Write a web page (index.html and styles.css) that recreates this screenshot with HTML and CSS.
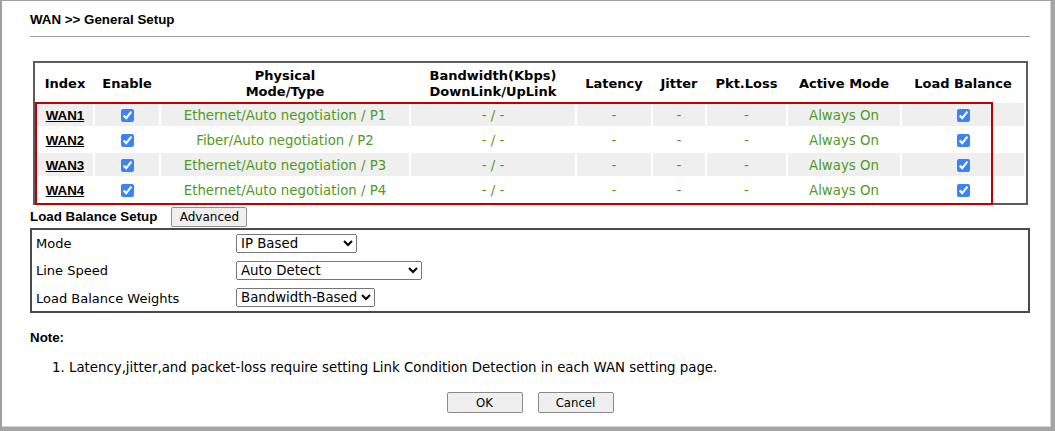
FILE: index.html
```html
<!DOCTYPE html>
<html lang="en">
<head>
  <meta charset="UTF-8" />
  <title>WAN &gt;&gt; General Setup</title>
  <link rel="stylesheet" href="styles.css">
</head>
<body>
  <div class="frame">
    <h1 class="title">WAN &gt;&gt; General Setup</h1>
    <div class="rule"></div>

    <div class="wan-wrap">
      <table class="wan-table">
        <colgroup>
          <col style="width:56px">
          <col style="width:64px">
          <col style="width:248px">
          <col style="width:164px">
          <col style="width:74px">
          <col style="width:52px">
          <col style="width:79px">
          <col style="width:112px">
          <col style="width:122px">
        </colgroup>
        <tr>
          <th>Index</th>
          <th>Enable</th>
          <th>Physical<br>Mode/Type</th>
          <th>Bandwidth(Kbps)<br>DownLink/UpLink</th>
          <th>Latency</th>
          <th>Jitter</th>
          <th>Pkt.Loss</th>
          <th>Active Mode</th>
          <th>Load Balance</th>
        </tr>
        <tr class="alt">
          <td><a class="wan-link" href="#">WAN1</a></td>
          <td><input type="checkbox" checked></td>
          <td>Ethernet/Auto negotiation / P1</td>
          <td>- / -</td>
          <td>-</td>
          <td>-</td>
          <td>-</td>
          <td>Always On</td>
          <td><input type="checkbox" checked></td>
        </tr>
        <tr>
          <td><a class="wan-link" href="#">WAN2</a></td>
          <td><input type="checkbox" checked></td>
          <td>Fiber/Auto negotiation / P2</td>
          <td>- / -</td>
          <td>-</td>
          <td>-</td>
          <td>-</td>
          <td>Always On</td>
          <td><input type="checkbox" checked></td>
        </tr>
        <tr class="alt">
          <td><a class="wan-link" href="#">WAN3</a></td>
          <td><input type="checkbox" checked></td>
          <td>Ethernet/Auto negotiation / P3</td>
          <td>- / -</td>
          <td>-</td>
          <td>-</td>
          <td>-</td>
          <td>Always On</td>
          <td><input type="checkbox" checked></td>
        </tr>
        <tr>
          <td><a class="wan-link" href="#">WAN4</a></td>
          <td><input type="checkbox" checked></td>
          <td>Ethernet/Auto negotiation / P4</td>
          <td>- / -</td>
          <td>-</td>
          <td>-</td>
          <td>-</td>
          <td>Always On</td>
          <td><input type="checkbox" checked></td>
        </tr>
      </table>
      <div class="highlight"></div>
    </div>

    <div class="lb-head">
      <span class="lb-title">Load Balance Setup</span>
      <button class="adv-btn" type="button">Advanced</button>
    </div>

    <div class="lb-box">
      <label>Mode</label>
      <select class="sel-mode">
        <option>IP Based</option>
        <option>Session Based</option>
      </select>

      <label>Line Speed</label>
      <select class="sel-speed">
        <option>Auto Detect</option>
        <option>According to Line Speed</option>
      </select>

      <label>Load Balance Weights</label>
      <select class="sel-weight">
        <option>Bandwidth-Based</option>
        <option>Manual</option>
      </select>
    </div>

    <div class="note-title">Note:</div>
    <div class="note-text">1. Latency,jitter,and packet-loss require setting Link Condition Detection in each WAN setting page.</div>

    <div class="actions">
      <button type="submit">OK</button>
      <button type="button">Cancel</button>
    </div>
  </div>
</body>
</html>
```

FILE: styles.css
```css
body {
  margin: 0;
  font-family: "DejaVu Sans", Verdana, sans-serif;
  font-size: 13px;
  color: #000;
  background-color: white;
}

.frame {
  box-sizing: border-box;
  width: 1055px;
  height: 431px;
  border-left: 2px solid #a0a0a0;
  border-top: 1px solid #a0a0a0;
  border-right: 4px solid #a4a4a4;
  border-bottom: 4px solid #a4a4a4;
  box-shadow: inset -1px -1px 0 #d4d4d4;
  padding: 11px 21px 0 28px;
}

.title {
  margin: 0;
  font: bold 13.33px/16px "Liberation Sans", Arial, sans-serif;
}

.rule {
  margin-top: 8px;
  height: 1px;
  background-color: #a0a0a0;
}

.wan-wrap {
  position: relative;
  width: 995px;
  margin: 24px 0 0 3px;
}

.wan-table {
  width: 995px;
  table-layout: fixed;
  border-collapse: separate;
  border-spacing: 2px;
  border: 2px solid #5c5c5c;
}

.wan-table th {
  height: 35px;
  padding: 1px 0 0;
  font-weight: bold;
  font-size: 13px;
  line-height: 16px;
  text-align: center;
  vertical-align: middle;
}

.wan-table td {
  height: 21px;
  padding: 2px 0 0;
  text-align: center;
  vertical-align: middle;
  color: #4f9b22;
  font-size: 13.33px;
  line-height: 16px;
}

.wan-table tr.alt td {
  background-color: #efefef;
}

.wan-table input[type="checkbox"] {
  width: 13px;
  height: 13px;
  margin: 0 0 1px;
  vertical-align: middle;
  accent-color: #3b84f5;
}

.wan-link {
  color: #000;
  font: bold 13.33px "Liberation Sans", Arial, sans-serif;
  text-decoration: underline;
}

/* red annotation box drawn over the WAN rows */
.highlight {
  position: absolute;
  left: 2px;
  top: 41px;
  width: 958px;
  height: 103px;
  box-sizing: border-box;
  border: 2px solid #c00000;
  pointer-events: none;
}

.lb-head {
  display: flex;
  align-items: center;
  height: 23px;
}

.lb-title {
  font: bold 13.33px/16px "Liberation Sans", Arial, sans-serif;
}

.adv-btn {
  margin-left: 14px;
  width: 76px;
  height: 20px;
  padding: 0;
  font: 12px "DejaVu Sans", Verdana, sans-serif;
  color: #000;
  background-color: #efefef;
  border: 1px solid #8f8f8f;
  border-radius: 2px;
}

.lb-box {
  display: grid;
  grid-template-columns: 200px auto;
  grid-template-rows: 26px 28px 27px;
  align-items: center;
  padding-left: 4px;
  border: 2px solid #4a4a4a;
}

.lb-box label {
  padding-top: 1px;
}

.lb-box select {
  justify-self: start;
  height: 19px;
  font: 13.33px "DejaVu Sans", Verdana, sans-serif;
  color: #000;
}

.sel-mode {
  width: 121px;
}

.sel-speed {
  width: 186px;
}

.note-title {
  margin-top: 17px;
  font: bold 13.33px/16px "Liberation Sans", Arial, sans-serif;
}

.note-text {
  margin-top: 14px;
  padding-left: 22px;
  font: 13.33px/16px "DejaVu Sans", Verdana, sans-serif;
}

.actions {
  display: flex;
  justify-content: center;
  gap: 15px;
  margin-top: 16px;
}

.actions button {
  width: 76px;
  height: 21px;
  padding: 0;
  font: 13px "DejaVu Sans Condensed", "DejaVu Sans", sans-serif;
  color: #000;
  background-color: #efefef;
  border: 1px solid #8a8a8a;
  border-radius: 2px;
}
```
